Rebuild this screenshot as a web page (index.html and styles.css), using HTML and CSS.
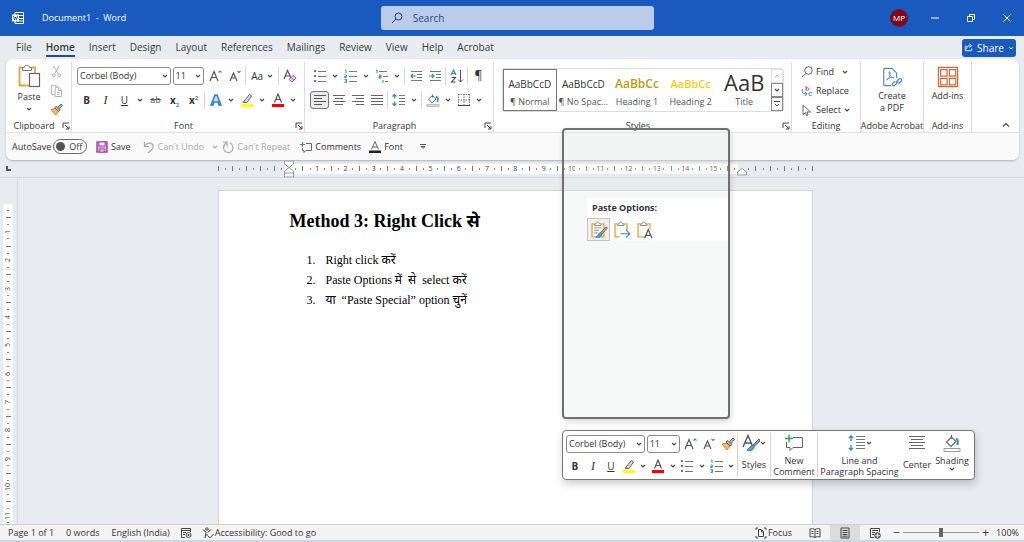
FILE: index.html
```html
<!DOCTYPE html>
<html lang="en">
<head>
  <meta charset="UTF-8" />
  <meta name="viewport" content="width=device-width, initial-scale=1.0"/>
  <title>Document1 - Word</title>
  <link rel="stylesheet" href="styles.css">
</head>
<body>

<!-- shared icons -->
<svg class="symbols" aria-hidden="true">
  <symbol id="chev" viewBox="0 0 6 6"><path d="M1 2l2 2 2-2" fill="none" stroke="#444" stroke-width="1.1"/></symbol>
  <symbol id="launch" viewBox="0 0 8 8"><path d="M1 6V1h6M3 3l4 4M7 4v3H4" fill="none" stroke="#444"/></symbol>
  <symbol id="bullets" viewBox="0 0 14 14"><g fill="#2b88c9"><rect x="1" y="1" width="2" height="2"/><rect x="1" y="6" width="2" height="2"/><rect x="1" y="11" width="2" height="2"/></g><path d="M5 2.500h8M5 7.500h8M5 12.500h8" stroke="#777"/></symbol>
  <symbol id="numbers" viewBox="0 0 14 14"><path d="M1 1h1v3M.5 6h2v1.500h-2v1h2M.5 10.500h2v3h-2M1 12h1" fill="none" stroke="#2b88c9" stroke-width=".9"/><path d="M5 2.500h8M5 7.500h8M5 12.500h8" stroke="#777"/></symbol>
  <symbol id="multi" viewBox="0 0 14 14"><path d="M1 1h1v3M4 6h2v3H4V7.500h2M8 11v3" fill="none" stroke="#2b88c9"/><path d="M4 2.500h8M8 7.500h5M10 12.500h3" stroke="#777"/></symbol>
  <symbol id="outdent" viewBox="0 0 14 14"><path d="M2 2.500h11M8 5.500h5M8 8.500h5M2 11.500h11" stroke="#777"/><path d="M7 7H2m2-2L2 7l2 2" fill="none" stroke="#2b88c9" stroke-width="1.200"/></symbol>
  <symbol id="indent" viewBox="0 0 14 14"><path d="M2 2.500h11M8 5.500h5M8 8.500h5M2 11.500h11" stroke="#777"/><path d="M1 7h5M4 5l2 2-2 2" fill="none" stroke="#2b88c9" stroke-width="1.200"/></symbol>
  <symbol id="sort" viewBox="0 0 14 14"><path d="M1 6l2.500-5L6 6M2 4.500h3" fill="none" stroke="#2b88c9" stroke-width="1.200"/><path d="M1.500 8.500h4l-4 4.500h4" fill="none" stroke="#444" stroke-width="1.100"/><path d="M10.500 1v12M8 10.500l2.500 2.500 2.500-2.500" fill="none" stroke="#555"/></symbol>
  <symbol id="al" viewBox="0 0 14 14"><path d="M1 2.500h12M1 5.500h8M1 8.500h12M1 11.500h8" stroke="#555"/></symbol>
  <symbol id="ac" viewBox="0 0 14 14"><path d="M1 2.500h12M3 5.500h8M1 8.500h12M3 11.500h8" stroke="#666"/></symbol>
  <symbol id="ar" viewBox="0 0 14 14"><path d="M1 2.500h12M5 5.500h8M1 8.500h12M5 11.500h8" stroke="#666"/></symbol>
  <symbol id="aj" viewBox="0 0 14 14"><path d="M1 2.500h12M1 5.500h12M1 8.500h12M1 11.500h12" stroke="#666"/></symbol>
  <symbol id="spacing" viewBox="0 0 14 14"><path d="M2.500 1.500v4M.5 3.500l2-2 2 2M2.500 8.500v4M.5 10.500l2 2 2-2" fill="none" stroke="#2b88c9" stroke-width="1.200"/><path d="M7 2.500h6M7 5.500h6M7 8.500h6M7 11.500h6" stroke="#777"/></symbol>
  <symbol id="shade" viewBox="0 0 14 14"><path d="M6.500 1.500v3M2.500 6l4-3.500 3.500 3.500-4 4z" fill="#fff" stroke="#666"/><path d="M10 4c2 0 2 2 1.500 5" fill="none" stroke="#2b88c9" stroke-width="1.800"/><rect x="1" y="11.500" width="12" height="2" fill="#ddd" stroke="#aaa" stroke-width=".7"/></symbol>
  <symbol id="borders" viewBox="0 0 14 14"><path d="M1.500 1v11M12.500 1v11M1 1.500h12M7 1v11M1 7h12" stroke="#777" stroke-dasharray="1.500 1"/><path d="M1 12.500h12" stroke="#444"/></symbol>
  <symbol id="pen" viewBox="0 0 14 14"><path d="M4 8l5.500-6.500 2 1.500L7 9.500H4zM4 8l-1 2" fill="#d8d8d8" stroke="#666"/><rect x="1" y="11" width="12" height="3" fill="#ffff00"/></symbol>
  <symbol id="fontcolor" viewBox="0 0 14 14"><path d="M3.500 9.500L7 1l3.500 8.500M4.500 6.500h5" fill="none" stroke="#555" stroke-width="1.200"/><rect x="1" y="11" width="12" height="3" fill="#f00"/></symbol>
  <symbol id="effects" viewBox="0 0 14 14"><path d="M2 12L6 2h2l4 10h-2L9 9H5l-1 3z" fill="#c9e2f5" stroke="#2b7fc2" stroke-width="1.500"/></symbol>
  <symbol id="grow" viewBox="0 0 14 14"><path d="M1 12L5 2.500 9 12M2.500 8.500h5" fill="none" stroke="#555" stroke-width="1.200"/><path d="M9.500 3.500L11 2l1.500 1.500" fill="none" stroke="#2b88c9" stroke-width="1.100"/></symbol>
  <symbol id="shrink" viewBox="0 0 14 14"><path d="M2 12l3.500-8L9 12M3.500 9h4.500" fill="none" stroke="#555" stroke-width="1.200"/><path d="M9.500 2L11 3.500 12.500 2" fill="none" stroke="#2b88c9" stroke-width="1.100"/></symbol>
  <symbol id="clear" viewBox="0 0 14 14"><path d="M1 10L4.500 1.500 8 9M2 7h5" fill="none" stroke="#555" stroke-width="1.200"/><path d="M6 10.500l4-4 3 2.500-4 4zM8 8.500l3 2.500" fill="#f3dff5" stroke="#a845b5"/></symbol>
  <symbol id="painter" viewBox="0 0 14 14"><path d="M1 7l5-1 3 3-3 4z" fill="#f8b76a" stroke="#e07b1a"/><path d="M5 5l2-1.500 4 4L9 9zM8.500 4.500L12 1l1.500 1.500-3.500 4" fill="#bbb" stroke="#555"/></symbol>
  <symbol id="board" viewBox="0 0 22 22"><path d="M5 3.500H2.500v16H17v-16h-3" fill="#fff" stroke="#e8a33d" stroke-width="1.600"/><path d="M5.500 5.500v-2h2c0-3 4-3 4 0h2v2z" fill="#fff" stroke="#777"/></symbol>
</svg>

<header class="titlebar">
  <div class="title-left">
    <svg class="word-logo" viewBox="0 0 14 14"><path d="M4 1.500h8.500v11H4zM7 4.500h5M7 7.500h5M7 10h5" fill="none" stroke="#fff"/><rect x="1" y="3.500" width="7" height="7" fill="#fff"/><path d="M2.500 5l1 4 1-3 1 3 1-4" fill="none" stroke="#185abd" stroke-width=".9"/></svg>
    <span>Document1&nbsp; -&nbsp; Word</span>
  </div>
  <label class="search">
    <svg viewBox="0 0 12 12"><circle cx="7.500" cy="4.500" r="3.500" fill="none" stroke="#1d3f7c"/><path d="M5 7l-4 4" stroke="#1d3f7c"/></svg>
    <input type="text" placeholder="Search" aria-label="Search">
  </label>
  <div class="title-right">
    <span class="avatar">MP</span>
    <button class="win" aria-label="Minimize"><svg viewBox="0 0 10 10"><path d="M1 5h8" stroke="#fff"/></svg></button>
    <button class="win" aria-label="Restore"><svg viewBox="0 0 10 10"><path d="M1.500 3.500h5v5h-5zM3.500 3.500V1.500h5v5h-2" fill="none" stroke="#fff"/></svg></button>
    <button class="win" aria-label="Close"><svg viewBox="0 0 10 10"><path d="M1.500 1.500l7 7M8.500 1.500l-7 7" stroke="#fff"/></svg></button>
  </div>
</header>

<nav class="tabs">
  <a href="#">File</a>
  <a href="#" class="active">Home</a>
  <a href="#">Insert</a>
  <a href="#">Design</a>
  <a href="#">Layout</a>
  <a href="#">References</a>
  <a href="#">Mailings</a>
  <a href="#">Review</a>
  <a href="#">View</a>
  <a href="#">Help</a>
  <a href="#">Acrobat</a>
  <button class="share"><svg viewBox="0 0 10 10"><path d="M3 3.500H1.500v5h7V6M3 6.500c0-3 2-3.500 4-3.500M6 1l2.500 2L6 5" fill="none" stroke="#fff"/></svg>Share<svg class="chev" viewBox="0 0 6 6"><path d="M1 2l2 2 2-2" fill="none" stroke="#fff"/></svg></button>
</nav>

<section class="ribbon">
  <div class="groups">

    <div class="group">
      <div class="group-body clipboard">
        <button class="big"><svg class="i26" viewBox="0 0 24 24"><path d="M5 3.500H2.500v18H12M15 3.500h3V9" fill="none" stroke="#e8a33d" stroke-width="1.800"/><path d="M5.500 6.500v-3h2c0-3 5-3 5 0h2v3z" fill="#fff" stroke="#777"/><rect x="12.500" y="9.500" width="10" height="13" fill="#fff" stroke="#666" stroke-width="1.200"/></svg>Paste<svg class="chev"><use href="#chev"/></svg></button>
        <div class="stack">
          <button class="icon" aria-label="Cut"><svg viewBox="0 0 14 14"><path d="M4 1l5 8.500M10 1L5 9.500" stroke="#aaa" fill="none"/><circle cx="4" cy="11" r="1.600" fill="none" stroke="#aaa"/><circle cx="10" cy="11" r="1.600" fill="none" stroke="#aaa"/></svg></button>
          <button class="icon" aria-label="Copy"><svg viewBox="0 0 14 14"><path d="M5 11.500H1.500v-10h5l1 1.500M5.500 3.500h4l3 3v7h-7zM9 4v3h3M7.500 9h3M7.500 11h3" fill="none" stroke="#aaa"/></svg></button>
          <button class="icon" aria-label="Format Painter"><svg><use href="#painter"/></svg></button>
        </div>
      </div>
      <div class="group-name"><span>Clipboard</span><button class="launch" aria-label="Clipboard settings"><svg><use href="#launch"/></svg></button></div>
    </div>

    <div class="group">
      <div class="group-body">
        <div class="row">
          <label class="pick font-pick"><select aria-label="Font"><option>Corbel (Body)</option></select><svg class="chev"><use href="#chev"/></svg></label>
          <label class="pick size-pick"><select aria-label="Font size"><option>11</option></select><svg class="chev"><use href="#chev"/></svg></label>
          <button class="icon" aria-label="Increase font size"><svg><use href="#grow"/></svg></button>
          <button class="icon" aria-label="Decrease font size"><svg><use href="#shrink"/></svg></button>
          <i class="sep"></i>
          <button class="case">Aa<svg class="chev"><use href="#chev"/></svg></button>
          <i class="sep"></i>
          <button class="icon" aria-label="Clear formatting"><svg><use href="#clear"/></svg></button>
        </div>
        <div class="row">
          <button class="icon"><b>B</b></button>
          <button class="icon serif"><i>I</i></button>
          <button class="icon"><u>U</u></button>
          <button class="drop" aria-label="Underline styles"><svg><use href="#chev"/></svg></button>
          <button class="icon strike"><s>ab</s></button>
          <button class="icon"><b>x<sub>2</sub></b></button>
          <button class="icon"><b>x<sup>2</sup></b></button>
          <i class="sep"></i>
          <button class="icon" aria-label="Text effects"><svg><use href="#effects"/></svg></button>
          <button class="drop" aria-label="More text effects"><svg><use href="#chev"/></svg></button>
          <button class="icon" aria-label="Highlight"><svg><use href="#pen"/></svg></button>
          <button class="drop" aria-label="Highlight colours"><svg><use href="#chev"/></svg></button>
          <button class="icon" aria-label="Font colour"><svg><use href="#fontcolor"/></svg></button>
          <button class="drop" aria-label="Font colours"><svg><use href="#chev"/></svg></button>
        </div>
      </div>
      <div class="group-name"><span>Font</span><button class="launch" aria-label="Font settings"><svg><use href="#launch"/></svg></button></div>
    </div>

    <div class="group">
      <div class="group-body">
        <div class="row">
          <button class="icon" aria-label="Bullets"><svg><use href="#bullets"/></svg></button>
          <button class="drop" aria-label="Bullet library"><svg><use href="#chev"/></svg></button>
          <button class="icon" aria-label="Numbering"><svg><use href="#numbers"/></svg></button>
          <button class="drop" aria-label="Numbering library"><svg><use href="#chev"/></svg></button>
          <button class="icon" aria-label="Multilevel list"><svg><use href="#multi"/></svg></button>
          <button class="drop" aria-label="List library"><svg><use href="#chev"/></svg></button>
          <i class="sep"></i>
          <button class="icon" aria-label="Decrease indent"><svg><use href="#outdent"/></svg></button>
          <button class="icon" aria-label="Increase indent"><svg><use href="#indent"/></svg></button>
          <i class="sep"></i>
          <button class="icon" aria-label="Sort"><svg><use href="#sort"/></svg></button>
          <i class="sep"></i>
          <button class="icon pilcrow">¶</button>
        </div>
        <div class="row">
          <button class="icon pressed" aria-label="Align left"><svg><use href="#al"/></svg></button>
          <button class="icon" aria-label="Align centre"><svg><use href="#ac"/></svg></button>
          <button class="icon" aria-label="Align right"><svg><use href="#ar"/></svg></button>
          <button class="icon" aria-label="Justify"><svg><use href="#aj"/></svg></button>
          <i class="sep"></i>
          <button class="icon" aria-label="Line spacing"><svg><use href="#spacing"/></svg></button>
          <button class="drop" aria-label="Spacing options"><svg><use href="#chev"/></svg></button>
          <i class="sep"></i>
          <button class="icon" aria-label="Shading"><svg><use href="#shade"/></svg></button>
          <button class="drop" aria-label="Shading colours"><svg><use href="#chev"/></svg></button>
          <button class="icon" aria-label="Borders"><svg><use href="#borders"/></svg></button>
          <button class="drop" aria-label="Border options"><svg><use href="#chev"/></svg></button>
        </div>
      </div>
      <div class="group-name"><span>Paragraph</span><button class="launch" aria-label="Paragraph settings"><svg><use href="#launch"/></svg></button></div>
    </div>

    <div class="group">
      <div class="group-body">
        <div class="gallery">
          <button class="style-item selected"><span class="sample">AaBbCcD</span>¶ Normal</button>
          <button class="style-item"><span class="sample">AaBbCcD</span>¶ No Spac...</button>
          <button class="style-item"><span class="sample h1-sample">AaBbCc</span>Heading 1</button>
          <button class="style-item"><span class="sample h2-sample">AaBbCc</span>Heading 2</button>
          <button class="style-item"><span class="sample title-sample">AaB</span>Title</button>
          <div class="gallery-nav">
            <button class="off" aria-label="Previous row"><svg viewBox="0 0 6 6"><path d="M1 4l2-2 2 2" fill="none" stroke="#bbb"/></svg></button>
            <button aria-label="Next row"><svg><use href="#chev"/></svg></button>
            <button aria-label="More styles"><svg viewBox="0 0 6 6"><path d="M0 .5h6M1 3l2 2 2-2" fill="none" stroke="#444"/></svg></button>
          </div>
        </div>
      </div>
      <div class="group-name"><span>Styles</span><button class="launch" aria-label="Styles pane"><svg><use href="#launch"/></svg></button></div>
    </div>

    <div class="group">
      <div class="group-body editing">
        <button><svg class="i12" viewBox="0 0 12 12"><circle cx="7.500" cy="4.500" r="3.800" fill="none" stroke="#666"/><path d="M5 7.500L1 11" stroke="#666"/></svg>Find<svg class="chev far"><use href="#chev"/></svg></button>
        <button><svg class="i12" viewBox="0 0 12 12"><path d="M5 1v4M5 3.500c0-1 3-1 3 .5s-3 1.500-3 .5" fill="none" stroke="#a845b5"/><path d="M11 8c-2-1.500-3.500 0-3 1.500s2 1.500 3 .5M1.500 4C.5 8 2 9 5.500 9M4 7l2 2-2 2" fill="none" stroke="#2b88c9"/></svg>Replace</button>
        <button><svg class="i12" viewBox="0 0 12 12"><path d="M2 1v9.500l2.500-2 1 3 1.500-.5-1-3h3.500z" fill="none" stroke="#666"/></svg>Select<svg class="chev"><use href="#chev"/></svg></button>
      </div>
      <div class="group-name"><span>Editing</span></div>
    </div>

    <div class="group">
      <div class="group-body acrobat">
        <button class="big"><svg class="i24" viewBox="0 0 24 24"><path d="M11 21.500H4.500c-1 0-1.500-.5-1.500-1.500V4c0-1 .5-1.500 1.500-1.500H12l5 5V13" fill="none" stroke="#4f86dd" stroke-width="1.300"/><path d="M6 15c4-2 5-7 3.500-8.500S8.500 12 14 13c-2-1-5-.5-8 2z" fill="none" stroke="#4f86dd"/><path d="M16 18l4-4c2-1 3.500 1 2 2.500l-3 3M19 17l-4 4c-2 1.500-4-.5-2-2.500l2-2" fill="none" stroke="#4f86dd" stroke-width="1.300"/></svg><span>Create<br>a PDF</span></button>
      </div>
      <div class="group-name"><span>Adobe Acrobat</span></div>
    </div>

    <div class="group">
      <div class="group-body addins">
        <button class="big"><svg class="i24" viewBox="0 0 24 24"><path d="M1.500 1.500h21v21h-21zM4 4h7v7H4zM13.500 4h7v7h-7zM4 13.500h7v7H4zM13.500 13.500h7v7h-7z" fill="none" stroke="#d9643a" stroke-width="1.300"/></svg>Add-ins</button>
      </div>
      <div class="group-name"><span>Add-ins</span></div>
    </div>

    <div class="collapse"><button aria-label="Collapse ribbon"><svg viewBox="0 0 8 8"><path d="M1 5.500l3-3 3 3" fill="none" stroke="#444" stroke-width="1.100"/></svg></button></div>
  </div>

  <div class="quickbar">
    <label class="autosave">AutoSave <input type="checkbox" aria-label="AutoSave"><span class="switch">Off</span></label>
    <button class="save"><svg class="i12" viewBox="0 0 12 12"><path d="M1 1h10v10H1z" fill="#d99be0" stroke="#a845b5" stroke-width="1.500"/><path d="M3 1h6v4H3zM4 8h4v3H4z" fill="#fff" stroke="#a845b5"/></svg>Save</button>
    <button class="undo" disabled><svg class="i12" viewBox="0 0 12 12"><path d="M1.500 1v4.500H6M1.500 5C5 0 11 2 10 6.500 9.500 8 8 9.500 5 12" fill="none" stroke="#aaa" stroke-width="1.200"/></svg>Can't Undo<svg class="chev fade"><use href="#chev"/></svg></button>
    <button class="redo" disabled><svg class="i12" viewBox="0 0 12 12"><path d="M1 1h4v4M4.500 1.500C-1 6 2 11.500 6.500 11.500S13 5 8 1.500" fill="none" stroke="#aaa" stroke-width="1.200"/></svg>Can't Repeat</button>
    <button class="comments"><svg class="i12" viewBox="0 0 12 12"><path d="M6 2.500h5.500v7H6l-2 2v-2H2.500V7" fill="none" stroke="#666"/><path d="M0 3.500h5M2.500 1v5" stroke="#2f9e4f"/></svg>Comments</button>
    <button class="fontbtn"><svg class="i12" viewBox="0 0 12 12"><path d="M2.500 8.500L6 .5l3.500 8M3.500 6h5" fill="none" stroke="#666"/><rect y="9.500" width="12" height="2.500" fill="#222"/></svg>Font</button>
    <button aria-label="Customize toolbar"><svg class="i6" viewBox="0 0 6 6"><path d="M0 .5h6M1 2.500l2 2 2-2z" fill="none" stroke="#555"/></svg></button>
  </div>
</section>

<div class="ruler-row">
  <span class="tab-stop"></span>
  <div class="ruler-holder">
    <div class="ruler" id="hRuler"></div>
  </div>
</div>

<main class="workspace">
  <div class="v-holder"><div class="v-ruler" id="vRuler"></div></div>
  <div class="canvas">
    <article class="page">
      <h1>Method 3: Right Click <span lang="hi">से</span></h1>
      <ol>
        <li>Right click <span lang="hi">करें</span></li>
        <li>Paste Options <span lang="hi">में&nbsp; से</span>&nbsp; select <span lang="hi">करें</span></li>
        <li><span lang="hi">या</span>&nbsp; “Paste Special” option <span lang="hi">चुनें</span></li>
      </ol>
    </article>
  </div>
</main>

<footer class="status">
  <span class="pages">Page 1 of 1</span>
  <span class="words">0 words</span>
  <span class="lang">English (India)</span>
  <svg class="i12 macro" viewBox="0 0 12 12"><path d="M5 10.500H1.500v-9h9V5M1.500 3.500h9M3 5.500h3M3 7.500h2" fill="none" stroke="#444"/><circle cx="8.500" cy="8" r="2.500" fill="none" stroke="#444"/><circle cx="8.500" cy="8" r="1" fill="#444"/></svg>
  <span class="access"><svg class="i12" viewBox="0 0 12 12"><circle cx="5" cy="2" r="1.200" fill="none" stroke="#444"/><path d="M1 2.500c1 2 3 1.500 3 3L3 11M9 2.500c-1 2-3 1.500-3 3M5 7v2M6 9l2 2 3.500-4" fill="none" stroke="#444"/></svg>Accessibility: Good to go</span>
  <div class="status-right">
    <button class="focus"><svg class="i12" viewBox="0 0 12 12"><path d="M3 1H1v2M9 1h2v2M3 11H1V9M9 11h2V9M3.500 2.500h3l2 2v5h-5zM6.500 3v2h2" fill="none" stroke="#444"/></svg>Focus</button>
    <button class="view" aria-label="Read mode"><svg class="i12" viewBox="0 0 12 12"><path d="M6 2.500C4.500 1.500 2.500 1.500 1 2v8c1.500-.5 3.500-.5 5 .5 1.500-1 3.500-1 5-.5V2c-1.500-.5-3.500-.5-5 .5zM6 2.500v8M2.500 4.500h2M2.500 6.500h2M7.500 4.500h2M7.500 6.500h2" fill="none" stroke="#444"/></svg></button>
    <button class="view on" aria-label="Print layout"><svg class="i12" viewBox="0 0 12 12"><path d="M2 1h8v10H2zM3.500 3.500h5M3.500 5.500h5M3.500 7.500h5M3.500 9.200h5" fill="none" stroke="#444"/></svg></button>
    <button class="view" aria-label="Web layout"><svg class="i12" viewBox="0 0 12 12"><path d="M5 10.500H1.500v-9h9V5M3 3.500h6M3 5.500h3M3 7.500h2" fill="none" stroke="#444"/><circle cx="8.500" cy="8.500" r="2.800" fill="#888" stroke="#444"/><path d="M6 8.500h5M8.500 6v5" stroke="#fff" stroke-width=".6"/></svg></button>
    <button class="zoom-step">−</button>
    <input class="zoom" type="range" min="0" max="100" value="50" aria-label="Zoom">
    <button class="zoom-step">+</button>
    <span class="percent">100%</span>
  </div>
</footer>

<!-- right click menu -->
<div class="context-menu">
  <div class="paste-options">
    <b>Paste Options:</b>
    <div class="paste-row">
      <button class="paste-opt hot" aria-label="Keep source formatting"><svg viewBox="0 0 22 22"><use href="#board"/><path d="M5 8.500h9M5 11.500h6" stroke="#e05a5a"/><path d="M5 14.500h4" stroke="#2b88c9"/><path d="M20 7l-7 7 1.500 2L21 9z" fill="#aaa" stroke="#555"/><path d="M13 14c-3 0-2 4-6 5.500 3 1.500 8 0 7.500-3.500z" fill="#4aa3e0" stroke="#2b78b5"/></svg></button>
      <button class="paste-opt" aria-label="Merge formatting"><svg viewBox="0 0 22 22"><use href="#board"/><path d="M8 11h14v10H8z" fill="#fff"/><path d="M9 15.500h11M16 11l4.500 4.500L16 20" fill="none" stroke="#2b88c9" stroke-width="1.300"/></svg></button>
      <button class="paste-opt" aria-label="Keep text only"><svg viewBox="0 0 22 22"><use href="#board"/><path d="M10 10h12v12H10z" fill="#fff"/><path d="M10.500 21L15 10.500 19.500 21M12 17.500h6" fill="none" stroke="#555" stroke-width="1.500"/></svg></button>
    </div>
  </div>
</div>

<!-- floating mini toolbar -->
<div class="mini">
  <div class="mini-format">
    <div class="row">
      <label class="pick mini-font"><select aria-label="Toolbar font"><option>Corbel (Body)</option></select><svg class="chev"><use href="#chev"/></svg></label>
      <label class="pick mini-size"><select aria-label="Toolbar font size"><option>11</option></select><svg class="chev"><use href="#chev"/></svg></label>
      <button class="icon" aria-label="Increase font size"><svg><use href="#grow"/></svg></button>
      <button class="icon" aria-label="Decrease font size"><svg><use href="#shrink"/></svg></button>
      <button class="icon" aria-label="Format Painter"><svg><use href="#painter"/></svg></button>
    </div>
    <div class="row">
      <button class="icon"><b>B</b></button>
      <button class="icon serif"><i>I</i></button>
      <button class="icon"><u>U</u></button>
      <button class="icon" aria-label="Highlight"><svg><use href="#pen"/></svg></button>
      <button class="drop" aria-label="Highlight colours"><svg><use href="#chev"/></svg></button>
      <button class="icon" aria-label="Font colour"><svg><use href="#fontcolor"/></svg></button>
      <button class="drop" aria-label="Font colours"><svg><use href="#chev"/></svg></button>
      <button class="icon" aria-label="Bullets"><svg><use href="#bullets"/></svg></button>
      <button class="drop" aria-label="Bullet library"><svg><use href="#chev"/></svg></button>
      <button class="icon" aria-label="Numbering"><svg><use href="#numbers"/></svg></button>
      <button class="drop" aria-label="Numbering library"><svg><use href="#chev"/></svg></button>
    </div>
  </div>
  <button class="mini-big styles-btn"><span class="pic"><svg class="i18" viewBox="0 0 18 18"><path d="M1 13L6 1.500 10 11M3 9h6" fill="none" stroke="#555" stroke-width="1.400"/><path d="M17 5l-6 6 1 1.500L18 7z" fill="#aaa" stroke="#555"/><path d="M11 11c-3 0-2 3-6 5 3 1.500 7.500 0 7-3.500z" fill="#4aa3e0" stroke="#2b78b5"/></svg><svg class="chev"><use href="#chev"/></svg></span>Styles</button>
  <button class="mini-big comment-btn"><span class="pic"><svg class="i18" viewBox="0 0 18 18"><path d="M8 3.500h9.500v10H8l-3 3v-3H1.500V8" fill="none" stroke="#666"/><path d="M0 4.500h8M4 .5v8" stroke="#2f9e4f" stroke-width="1.300"/></svg></span>New<br>Comment</button>
  <button class="mini-big line-btn"><span class="pic"><svg class="i18" viewBox="0 0 18 18"><path d="M3 2v5M1 4l2-2 2 2M3 11v5M1 14l2 2 2-2" fill="none" stroke="#2b88c9" stroke-width="1.300"/><path d="M8 2.500h9M8 5.500h9M8 8.500h9M8 11.500h9M8 14.500h9" stroke="#777"/></svg><svg class="chev"><use href="#chev"/></svg></span>Line and<br>Paragraph Spacing</button>
  <button class="mini-big center-btn"><span class="pic"><svg class="i18" viewBox="0 0 18 18"><path d="M1 2.500h16M3 5.500h12M1 8.500h16M3 11.500h12M1 14.500h16" stroke="#666"/></svg></span>Center</button>
  <button class="mini-big shading-btn"><span class="pic"><svg class="i18" viewBox="0 0 18 18"><path d="M8.500 1v4M3.500 8l5-5 4.500 4.500-5 5z" fill="#fff" stroke="#666" stroke-width="1.200"/><path d="M13 5c2 0 2 2 1.500 6" fill="none" stroke="#2b88c9" stroke-width="2"/><path d="M1 14.500h16v3H1z" fill="#fff" stroke="#999"/></svg></span>Shading<svg class="chev"><use href="#chev"/></svg></button>
</div>

<script src="script.js"></script>
</body>
</html>
```
FILE: styles.css
```css
body {
  margin: 0;
  height: 100vh;
  display: flex;
  flex-direction: column;
  overflow: hidden;
  position: relative;
  font-family: "Open Sans", "Noto Sans", sans-serif;
  font-size: 9px;
  line-height: 12px;
  color: #333;
  background-color: #e8ecf0;
}

button, select, input {
  font: inherit;
  color: inherit;
  margin: 0;
  padding: 0;
  border: none;
  background: none;
}

button {
  display: flex;
  align-items: center;
  justify-content: center;
  white-space: nowrap;
}

svg {
  display: block;
  flex: none;
}

.symbols {
  position: absolute;
  width: 0;
  height: 0;
}

.chev, .drop svg, .i6 { width: 6px; height: 6px; }
.i12 { width: 12px; height: 12px; }
.i18 { width: 18px; height: 18px; }
.i24 { width: 22px; height: 22px; }
.i26 { width: 24px; height: 24px; }

/* title bar */
.titlebar {
  height: 36px;
  flex: none;
  display: grid;
  grid-template-columns: 1fr 27% 1fr;
  align-items: center;
  padding-left: 11px;
  background-color: #185abd;
  color: #fff;
}

.title-left {
  display: flex;
  align-items: center;
  gap: 17px;
}

.word-logo {
  width: 14px;
  height: 14px;
}

.search {
  display: flex;
  align-items: center;
  gap: 10px;
  height: 24px;
  padding: 0 10px;
  border-radius: 3px;
  background-color: #b9cdeb;
  color: #2a4a80;
  font-size: 10px;
}

.search svg {
  width: 12px;
  height: 12px;
}

.search input {
  flex: 1;
  outline: none;
}

.search input::placeholder {
  color: #2a4a80;
}

.title-right {
  display: flex;
  align-items: center;
  justify-content: flex-end;
  padding-right: 12px;
}

.avatar {
  width: 18px;
  height: 18px;
  line-height: 18px;
  margin-right: 22px;
  border-radius: 50%;
  text-align: center;
  font-size: 8px;
  background-color: #7a0c1e;
}

.win {
  margin-left: 26px;
}

.win:first-of-type {
  margin-left: 0;
}

.win svg {
  width: 10px;
  height: 10px;
}

/* tabs */
.tabs {
  height: 23px;
  flex: none;
  display: flex;
  align-items: center;
  gap: 14px;
  padding: 0 8px 0 16px;
  font-size: 10px;
}

.tabs a {
  color: #3a3a3a;
  text-decoration: none;
  height: 16px;
  line-height: 17px;
  border-bottom: 2px solid transparent;
}

.tabs a.active {
  font-weight: 600;
  border-color: #1a4e9e;
}

.share {
  margin-left: auto;
  height: 18px;
  width: 54px;
  gap: 4px;
  border-radius: 3px;
  color: #fff;
  background-color: #185abd;
}

.share svg:first-child {
  width: 9px;
  height: 9px;
}

/* ribbon */
.ribbon {
  flex: none;
  margin: 0 5px 0 6px;
  border-radius: 7px;
  background-color: #fff;
  box-shadow: 0 1px 2px rgba(0, 0, 0, 0.25);
}

.groups {
  display: grid;
  grid-template-columns: 66px 233px 189px 298px 69px 63px 48px 1fr;
  height: 73px;
}

.group {
  display: flex;
  flex-direction: column;
  justify-content: space-between;
  margin: 3px 0 0;
  border-right: 1px solid #dcdcdc;
}

.group-body {
  display: flex;
  flex-direction: column;
  padding: 2px 5px 0;
}

.group-name {
  display: flex;
  justify-content: center;
  align-items: center;
  height: 12px;
  white-space: nowrap;
}

.group-name span {
  margin: 0 auto;
}

.launch svg {
  width: 8px;
  height: 8px;
}

.launch {
  margin-right: 1px;
}

.row {
  display: flex;
  align-items: center;
  height: 24px;
}

.icon {
  width: 19px;
  height: 18px;
  font-size: 10px;
}

.icon svg {
  width: 14px;
  height: 14px;
}

.icon sub, .icon sup {
  font-size: 6px;
  line-height: 0;
  color: #2b88c9;
}

.serif {
  font-family: "Liberation Serif", serif;
  font-size: 12px;
}

.strike {
  font-size: 9px;
  color: #555;
}

.pilcrow {
  font-size: 12px;
}

.pressed {
  box-sizing: border-box;
  border: 1px solid #777;
  border-radius: 3px;
  background-color: #ebebeb;
}

.drop {
  width: 12px;
  height: 18px;
}

.sep {
  width: 1px;
  height: 18px;
  margin: 0 1px;
  background-color: #d5d5d5;
}

.case {
  width: 30px;
  gap: 4px;
  font-size: 10px;
}

.pick {
  box-sizing: border-box;
  display: flex;
  align-items: center;
  height: 18px;
  margin-right: 2px;
  padding-right: 2px;
  border: 1px solid #8a8a8a;
  border-radius: 3px;
  background-color: #fff;
}

.pick select {
  appearance: none;
  flex: 1;
  min-width: 0;
  padding-left: 2px;
  outline: none;
}

.font-pick { width: 94px; }
.size-pick { width: 32px; }

.clipboard {
  flex-direction: row;
  justify-content: space-between;
  padding-top: 0;
}

.big {
  flex-direction: column;
  justify-content: flex-start;
  gap: 2px;
}

.clipboard .big {
  width: 40px;
  padding-top: 2px;
  gap: 3px;
}

.stack {
  display: flex;
  flex-direction: column;
}

.stack .icon {
  height: 19px;
}

.stack .icon svg {
  width: 13px;
  height: 13px;
}

.gallery {
  display: grid;
  grid-template-columns: repeat(5, 1fr) 12px;
  height: 44px;
  margin: 4px 2px 0 3px;
  box-sizing: border-box;
  border: 1px solid #dcdcdc;
  border-radius: 3px;
}

.style-item {
  flex-direction: column;
  color: #555;
  min-width: 0;
}

.style-item.selected {
  border: 1px solid #777;
}

.sample {
  display: block;
  height: 24px;
  line-height: 24px;
  font-size: 10px;
  color: #333;
}

.h1-sample {
  font-weight: 600;
  font-size: 12px;
  color: #c69a08;
}

.h2-sample {
  font-weight: 600;
  font-size: 11px;
  color: #fcca14;
}

.title-sample {
  font-size: 22px;
  line-height: 20px;
}

.gallery-nav {
  display: flex;
  flex-direction: column;
}

.gallery-nav button {
  flex: 1;
  border: 1px solid #888;
}

.gallery-nav .off {
  border-color: #e4e4e4;
}

.gallery-nav svg {
  width: 6px;
  height: 6px;
}

.editing {
  align-items: flex-start;
  padding: 0 9px;
}

.editing button {
  height: 19px;
  gap: 3px;
}

.editing .far {
  margin-left: 5px;
}

.acrobat, .addins {
  padding: 4px 0 0;
}

.collapse {
  display: flex;
  align-items: flex-end;
  justify-content: flex-end;
  padding: 0 9px 3px;
}

.collapse svg {
  width: 8px;
  height: 8px;
}

.quickbar {
  display: flex;
  align-items: center;
  height: 27px;
  padding-left: 6px;
  border-top: 1px solid #e0e0e0;
  border-radius: 0 0 7px 7px;
  background-color: #fafafa;
}

.quickbar button {
  gap: 3px;
}

.autosave {
  display: flex;
  align-items: center;
  width: 84px;
}

.autosave input {
  appearance: none;
  width: 0;
  height: 0;
}

.switch {
  box-sizing: border-box;
  display: flex;
  align-items: center;
  gap: 4px;
  width: 34px;
  height: 15px;
  margin-left: 2px;
  padding-left: 2px;
  border: 1px solid #666;
  border-radius: 8px;
  background-color: #fff;
}

.switch::before {
  content: "";
  width: 9px;
  height: 9px;
  border-radius: 50%;
  background-color: #555;
}

.save { margin-right: 12px; }
.undo, .redo { color: #aaa; }
.undo { margin-right: 4px; }
.redo { margin-right: 10px; }
.comments { margin-right: 8px; }
.fontbtn { margin-right: 17px; }

.undo .chev {
  margin-left: 5px;
}

.fade {
  opacity: 0.4;
}

/* rulers */
.ruler-row {
  flex: none;
  display: flex;
  align-items: center;
  height: 17px;
  border-bottom: 1px solid #d3d8dc;
}

.tab-stop {
  box-sizing: border-box;
  width: 5px;
  height: 5px;
  margin: 0 7px 0 6px;
  border-left: 2px solid #555;
  border-bottom: 2px solid #555;
}

.ruler-holder {
  flex: 1;
  display: flex;
  justify-content: center;
  padding-right: 12px;
}

.ruler {
  display: flex;
  width: 601px;
  height: 10px;
  font-size: 7px;
  line-height: 10px;
  color: #444;
}

.mark {
  flex: 1 1 0;
  min-width: 0;
  min-height: 0;
  display: flex;
  align-items: center;
  justify-content: center;
  position: relative;
}

.mark.inside {
  background-color: #fff;
}

.mark.dot::before {
  content: "";
  width: 1px;
  height: 2px;
  background-color: #888;
}

.mark.tick::before {
  content: "";
  width: 1px;
  height: 5px;
  background-color: #777;
}

.slider {
  position: absolute;
  z-index: 1;
  left: 50%;
  top: 50%;
  transform: translate(-50%, -50%);
  width: 10px;
  height: 17px;
}

.workspace {
  flex: 1;
  min-height: 0;
  display: flex;
}

.v-holder {
  box-sizing: border-box;
  width: 18px;
  padding: 26px 4px 0 3px;
  overflow: hidden;
  border-right: 1px solid #d3d8dc;
}

.v-ruler {
  display: flex;
  flex-direction: column;
  height: 319px;
  padding-top: 3px;
  font-size: 7px;
  line-height: 10px;
  color: #444;
  background-color: #fff;
}

.v-ruler .mark span {
  writing-mode: vertical-rl;
  transform: rotate(180deg);
}

.v-ruler .mark.dot::before {
  width: 2px;
  height: 1px;
}

.v-ruler .mark.tick::before {
  width: 5px;
  height: 1px;
}

/* document */
.canvas {
  flex: 1;
  display: flex;
  justify-content: center;
  padding: 12px 12px 0 0;
}

.page {
  box-sizing: border-box;
  width: 595px;
  padding: 18px 71px;
  border: 1px solid #d0d4d8;
  border-bottom: none;
  background-color: #fff;
  color: #000;
  font-family: "Liberation Serif", "Noto Sans Devanagari", serif;
  font-size: 12px;
  line-height: 20px;
}

.page h1 {
  margin: 0 0 17px;
  font-size: 18px;
  line-height: 24px;
}

.page ol {
  margin: 0;
  padding-left: 29px;
}

.page li {
  padding-left: 7px;
  height: 20px;
}

/* status bar */
.status {
  flex: none;
  display: flex;
  align-items: center;
  height: 15px;
  padding-left: 8px;
  border-top: 1px solid #d0d0d0;
  border-bottom: 2px solid #c9d6ee;
  background-color: #f3f3f3;
}

.words, .lang { margin-left: 12px; }
.macro { margin-left: 10px; }

.access {
  display: flex;
  align-items: center;
  gap: 1px;
  margin-left: 10px;
}

.status-right {
  display: flex;
  align-items: center;
  margin-left: auto;
  padding-right: 5px;
}

.focus {
  gap: 1px;
  margin-right: 8px;
}

.view {
  width: 30px;
  height: 15px;
}

.view.on {
  background-color: #dcdcdc;
}

.zoom-step {
  width: 13px;
  font-size: 12px;
}

.zoom {
  appearance: none;
  width: 76px;
  height: 12px;
}

.zoom::-webkit-slider-runnable-track {
  height: 1px;
  background-color: #999;
}

.zoom::-webkit-slider-thumb {
  appearance: none;
  width: 4px;
  height: 9px;
  margin-top: -4px;
  background-color: #666;
}

.percent {
  margin-left: 4px;
}

/* overlays */
.context-menu {
  position: absolute;
  left: 562px;
  top: 128px;
  width: 168px;
  height: 291px;
  box-sizing: border-box;
  padding-top: 68px;
  border: 2px solid #6f7072;
  border-radius: 4px;
  background-color: rgba(222, 230, 228, 0.25);
  box-shadow: 1px 3px 6px rgba(0, 0, 0, 0.15);
}

.paste-options {
  margin-left: 23px;
  padding: 4px 0 0;
  background-color: #fff;
}

.paste-options b {
  padding-left: 5px;
}

.paste-row {
  display: flex;
  padding-top: 4px;
}

.paste-opt {
  box-sizing: border-box;
  width: 23px;
  height: 23px;
}

.paste-opt svg {
  width: 18px;
  height: 18px;
}

.paste-opt.hot {
  border: 1px solid #c4c4c4;
  background-color: #f0f0f0;
}

.mini {
  position: absolute;
  left: 562px;
  top: 430px;
  height: 50px;
  box-sizing: border-box;
  display: flex;
  align-items: stretch;
  padding: 2px 3px;
  border: 1px solid #777;
  border-radius: 4px;
  background-color: #fff;
  box-shadow: 1px 4px 8px rgba(0, 0, 0, 0.2);
}

.mini-format {
  width: 171px;
}

.mini .row {
  height: 22px;
}

.mini-font { width: 81px; }
.mini-size { width: 34px; }

.mini-big {
  flex-direction: column;
  justify-content: flex-start;
  line-height: 11px;
}

.pic {
  display: flex;
  align-items: center;
  height: 20px;
  margin-bottom: 2px;
}

.styles-btn, .comment-btn, .line-btn {
  border-left: 1px solid #d5d5d5;
}

.styles-btn { width: 33px; }
.comment-btn { width: 47px; }
.line-btn { width: 84px; }
.center-btn { width: 32px; }
.shading-btn { width: 38px; }

.styles-btn .pic, .center-btn .pic {
  margin-bottom: 6px;
}
```
FILE: script.js
```js
const indentTop = '<svg class="slider" viewBox="0 0 10 17"><path d="M.5.500h9v3L5 7 .5 3.500zM.5 10.500L5 7l4.500 3.500v6h-9zM.5 12.500h9" fill="#fff" stroke="#999"/></svg>';
const indentRight = '<svg class="slider" viewBox="0 0 10 17"><path d="M.5 14.500v-3L5 8l4.500 3.500v3z" fill="#fff" stroke="#999"/></svg>';

// one mark for each quarter of a centimetre
function addMark(ruler, step, showNumber, inside) {
  const mark = document.createElement('span');
  mark.className = 'mark';
  if (inside) {
    mark.classList.add('inside');
  }

  if (step % 2 !== 0) {
    mark.classList.add('dot');
  } else if (step % 4 === 0 && showNumber) {
    const number = document.createElement('span');
    number.textContent = step / 4;
    mark.appendChild(number);
  } else if (step === 0 || step === 64) {
    mark.innerHTML = step === 0 ? indentTop : indentRight;
  } else {
    mark.classList.add('tick');
  }
  ruler.appendChild(mark);
}

const hRuler = document.getElementById('hRuler');
for (let i = -10; i <= 74; i++) {
  addMark(hRuler, i, i > 0 && i < 64, i >= 0 && i < 64);
}

const vRuler = document.getElementById('vRuler');
for (let i = 1; i <= 45; i++) {
  addMark(vRuler, i, true, false);
}
```
